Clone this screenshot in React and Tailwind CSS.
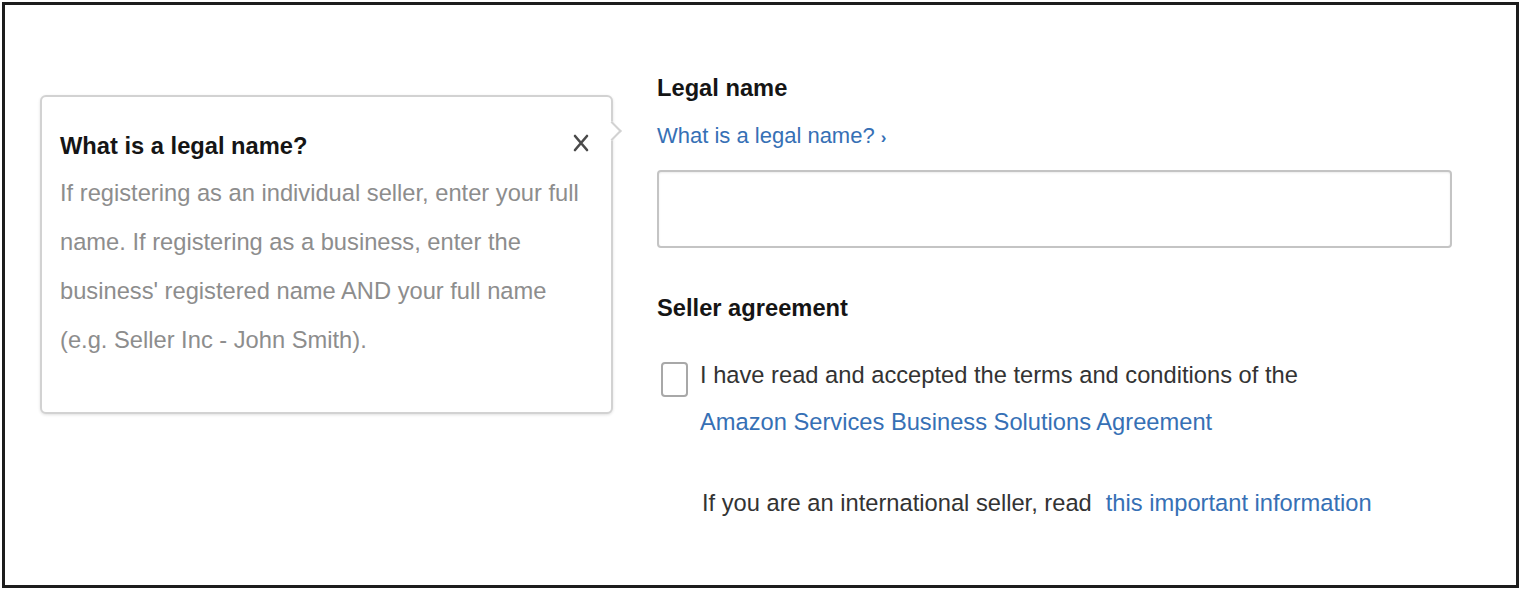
export default function App() {
  return (
    <div className="w-[1523px] h-[594px] bg-white pt-[2px] pl-[2px] font-['Liberation_Sans',Arial,sans-serif]">
      <div className="flex w-[1517px] h-[586px] border-[3px] border-[#1c1c1c]">
        {/* help popover */}
        <div className="relative ml-[35px] mt-[90px] h-[319px] w-[573px] rounded-[6px] border-2 border-[#d2d2d2] bg-white pl-[18px] pt-[26px] shadow-[0_1px_3px_rgba(0,0,0,0.12)]">
          <div className="absolute right-[-8px] top-[27px] h-[14px] w-[14px] rotate-45 border-r-2 border-t-2 border-[#d2d2d2] bg-white" />
          <div className="flex items-center justify-between pr-[22px]">
            <h3 className="text-[23.7px] font-bold leading-[46px] text-[#151515]">What is a legal name?</h3>
            <svg width="16" height="18" viewBox="0 0 16 18" className="mt-[-6px] text-[#4a4a4a]">
              <path d="M2 2 L14 16 M14 2 L2 16" stroke="currentColor" strokeWidth="2.6" strokeLinecap="round" fill="none" />
            </svg>
          </div>
          <p className="w-[530px] text-[23.7px] leading-[49px] text-[#8d8d8d]">
            If registering as an individual seller, enter your full name. If registering as a business, enter the business' registered name AND your full name (e.g. Seller Inc - John Smith).
          </p>
        </div>

        {/* form column */}
        <div className="ml-[44px] mt-[63px] flex w-[800px] flex-col">
          <label className="h-[40px] text-[23.7px] font-bold leading-[40px] text-[#151515]">Legal name</label>
          <a className="mt-[8px] h-[40px] text-[22px] leading-[40px] text-[#3670b5]">
            What is a legal name? <span className="text-[17px] font-bold leading-none">›</span>
          </a>
          <div className="mt-[14px] h-[78px] w-[795px] rounded-[4px] border-2 border-[#c4c4c4] bg-white shadow-[inset_0_1px_2px_rgba(0,0,0,0.08)]" />

          <h3 className="mt-[40px] text-[23.7px] font-bold leading-[40px] text-[#151515]">Seller agreement</h3>

          <div className="mt-[24px] flex">
            <div className="ml-[4px] mt-[10px] h-[35px] w-[27px] shrink-0 rounded-[4px] border-2 border-[#a8a8a8] bg-white" />
            <p className="ml-[12px] text-[23.7px] leading-[47px] text-[#333]">
              I have read and accepted the terms and conditions of the
              <br />
              <a className="text-[#3670b5]">Amazon Services Business Solutions Agreement</a>
            </p>
          </div>

          <p className="ml-[45px] mt-[34px] text-[23.7px] leading-[47px] text-[#333]">
            If you are an international seller, read
            <a className="ml-[14px] text-[#3670b5]">this important information</a>
          </p>
        </div>
      </div>
    </div>
  )
}
